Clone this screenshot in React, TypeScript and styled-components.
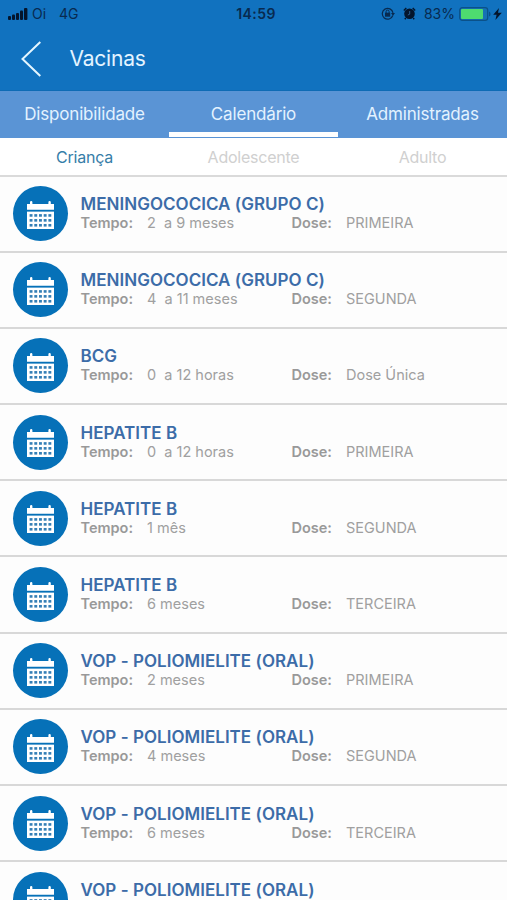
import React from "react";
import styled, { createGlobalStyle } from "styled-components";

const GlobalStyle = createGlobalStyle`
  * { box-sizing: border-box; }
  body {
    margin: 0;
    background: #fdfdfd;
    font-family: Inter, "Liberation Sans", sans-serif;
    overflow: hidden;
  }
`;

const Screen = styled.div`
  width: 507px;
  height: 900px;
  overflow: hidden;
  display: flex;
  flex-direction: column;
`;

const Header = styled.header`
  flex: none;
  height: 91px;
  background: #1172bf;
  border-bottom: 1px solid #0e6bb5;
`;

const StatusBar = styled.div`
  height: 27px;
  display: grid;
  grid-template-columns: 1fr auto 1fr;
  align-items: center;
  padding: 0 5px 0 8px;
  color: #082a50;
  font-size: 14px;
  line-height: 27px;
`;

const StatusGroup = styled.div<{ $end?: boolean }>`
  display: flex;
  align-items: center;
  justify-content: ${(p) => (p.$end ? "flex-end" : "flex-start")};
`;

const Carrier = styled.span`
  margin-left: 4px;
`;

const Network = styled.span`
  margin-left: 13px;
  letter-spacing: -0.1px;
`;

const Clock = styled.span`
  font-weight: 600;
  letter-spacing: 0.4px;
  margin-left: 2px;
`;

const Percent = styled.span`
  margin: 0 4px 0 8px;
  letter-spacing: 0;
`;

const TitleBar = styled.div`
  height: 63px;
  display: flex;
  align-items: center;
  padding-left: 21px;
`;

const Title = styled.h1`
  margin: 0 0 0 27.5px;
  font-size: 21px;
  font-weight: 400;
  line-height: 26px;
  letter-spacing: -0.2px;
  color: #e4f4ff;
`;

const Tabs = styled.nav`
  flex: none;
  height: 47px;
  display: grid;
  grid-template-columns: repeat(3, 1fr);
  background: #5a94d5;
`;

const Tab = styled.div<{ $active?: boolean }>`
  height: 46px;
  border-bottom: 5px solid ${(p) => (p.$active ? "#fff" : "transparent")};
  text-align: center;
  font-size: 17px;
  line-height: 46px;
  letter-spacing: -0.17px;
  color: #e3f2ff;
`;

const SubTabs = styled.nav`
  flex: none;
  height: 38.5px;
  display: grid;
  grid-template-columns: repeat(3, 1fr);
  border-bottom: 2px solid #dadada;
  background: #fff;
`;

const SubTab = styled.div<{ $active?: boolean }>`
  text-align: center;
  font-size: 16px;
  line-height: 38px;
  letter-spacing: -0.24px;
  color: ${(p) => (p.$active ? "#367da8" : "#d0d0d0")};
`;

const List = styled.ul`
  list-style: none;
  margin: 0;
  padding: 0;
`;

const Row = styled.li`
  height: 76.2px;
  display: flex;
  align-items: center;
  padding-left: 13px;
  border-bottom: 2px solid #d8d8d8;
`;

const Badge = styled.div`
  width: 55px;
  height: 55px;
  border-radius: 50%;
  background: #0671b8;
  display: flex;
  align-items: center;
  justify-content: center;
  padding-top: 2px;
`;

const Details = styled.div`
  flex: 1;
  margin: 0 0 0 12.5px;
`;

const Vaccine = styled.div`
  font-size: 17px;
  font-weight: 600;
  line-height: 20px;
  letter-spacing: 0.03px;
  color: #3c6ca8;
`;

const Facts = styled.div`
  display: grid;
  grid-template-columns: 66.5px 144.5px 54.5px 1fr;
  font-size: 14.5px;
  line-height: 18px;
  padding-bottom: 1px;
  color: #a0a0a0;
  white-space: pre;
`;

const Label = styled.span`
  font-weight: 600;
  color: #999;
`;

const Calendar = () => (
  <svg width="27" height="28" viewBox="0 0 27 29" preserveAspectRatio="none">
    <path d="M0 3h3V1.2Q3 0 4.2 0T5.4 1.2V3h16V1.2Q21.4 0 22.6 0t1.2 1.2V3H27v6H0z" fill="#fff" />
    <path d="M0 11h27v18H0z" fill="#fff" />
    {[13.6, 18.7, 23.8].map((y) =>
      [2.6, 7.3, 12, 16.7, 21.4].map((x) => (
        <rect key={`${x}-${y}`} x={x} y={y} width="2.9" height="2.7" fill="#347fb6" />
      ))
    )}
  </svg>
);

const Signal = () => (
  <svg width="20" height="12" viewBox="0 0 20 12" fill="#04152c">
    <rect x="0" y="8" width="3" height="4" rx="1" />
    <rect x="4" y="6.5" width="3" height="5.5" rx="1" />
    <rect x="8" y="5" width="3" height="7" rx="1" />
    <rect x="12" y="2.5" width="3" height="9.5" rx="1" />
    <rect x="16" y="0" width="3.4" height="12" rx="1" />
  </svg>
);

const RotationLock = () => (
  <svg width="14" height="13" viewBox="0 0 14 13" fill="none" stroke="#082a50">
    <path d="M11.8 8.5A5.4 5.4 0 1 1 12 5.8" strokeWidth="1.2" />
    <path d="M10 6h4l-2 2.8z" fill="#082a50" stroke="none" />
    <rect x="4" y="5.7" width="5.2" height="4" fill="#082a50" stroke="none" />
    <path d="M5.1 6V4.6a1.5 1.5 0 0 1 3 0V6" />
  </svg>
);

const AlarmIcon = styled.svg`
  margin-left: 8px;
`;

const Alarm = () => (
  <AlarmIcon width="13" height="13" viewBox="0 0 13 13">
    <circle cx="6.5" cy="6.8" r="5.3" fill="#04152c" />
    <path d="M.8 3.4 3.3 1M12.2 3.4 9.7 1M2.8 11l-1 1.3M10.2 11l1 1.3" stroke="#04152c" strokeWidth="1.4" />
    <path d="M6.7 4v3.2L4.8 8" stroke="#2c6598" strokeWidth=".9" fill="none" />
  </AlarmIcon>
);

const Battery = () => (
  <svg width="32" height="14" viewBox="0 0 32 14">
    <rect x=".7" y=".7" width="28" height="12.6" rx="2.6" fill="#1672b4" stroke="#0b5189" strokeWidth="1.2" />
    <rect x="2" y="2" width="22" height="10" rx="1" fill="#4edb70" />
    <path d="M30 4.5q1.6.5 1.6 2.5T30 9.5z" fill="#0b5189" />
  </svg>
);

const BoltIcon = styled.svg`
  margin-left: 2px;
`;

const Bolt = () => (
  <BoltIcon width="9" height="12" viewBox="0 0 9 12">
    <path d="M6 0 .2 6.8h3.4L2.4 12 8.8 4.8H5z" fill="#04152c" />
  </BoltIcon>
);

const Back = () => (
  <svg width="21" height="36" viewBox="0 0 21 36">
    <path d="M19.3 1 1.5 18l17.8 17" fill="none" stroke="#e4f6ff" strokeWidth="2" />
  </svg>
);

const vaccines = [
  ["MENINGOCOCICA (GRUPO C)", "2  a 9 meses", "PRIMEIRA"],
  ["MENINGOCOCICA (GRUPO C)", "4  a 11 meses", "SEGUNDA"],
  ["BCG", "0  a 12 horas", "Dose Única"],
  ["HEPATITE B", "0  a 12 horas", "PRIMEIRA"],
  ["HEPATITE B", "1 mês", "SEGUNDA"],
  ["HEPATITE B", "6 meses", "TERCEIRA"],
  ["VOP - POLIOMIELITE (ORAL)", "2 meses", "PRIMEIRA"],
  ["VOP - POLIOMIELITE (ORAL)", "4 meses", "SEGUNDA"],
  ["VOP - POLIOMIELITE (ORAL)", "6 meses", "TERCEIRA"],
  ["VOP - POLIOMIELITE (ORAL)"],
];

export default function App() {
  return (
    <Screen>
      <GlobalStyle />
      <Header>
        <StatusBar>
          <StatusGroup>
            <Signal />
            <Carrier>Oi</Carrier>
            <Network>4G</Network>
          </StatusGroup>
          <Clock>14:59</Clock>
          <StatusGroup $end>
            <RotationLock />
            <Alarm />
            <Percent>83%</Percent>
            <Battery />
            <Bolt />
          </StatusGroup>
        </StatusBar>
        <TitleBar>
          <Back />
          <Title>Vacinas</Title>
        </TitleBar>
      </Header>
      <Tabs>
        <Tab>Disponibilidade</Tab>
        <Tab $active>Calendário</Tab>
        <Tab>Administradas</Tab>
      </Tabs>
      <SubTabs>
        <SubTab $active>Criança</SubTab>
        <SubTab>Adolescente</SubTab>
        <SubTab>Adulto</SubTab>
      </SubTabs>
      <List>
        {vaccines.map(([name, time, dose], i) => (
          <Row key={i}>
            <Badge>
              <Calendar />
            </Badge>
            <Details>
              <Vaccine>{name}</Vaccine>
              <Facts>
                {time ? (
                  <>
                    <Label>Tempo:</Label>
                    <span>{time}</span>
                    <Label>Dose:</Label>
                    <span>{dose}</span>
                  </>
                ) : (
                  <span>&nbsp;</span>
                )}
              </Facts>
            </Details>
          </Row>
        ))}
      </List>
    </Screen>
  );
}
